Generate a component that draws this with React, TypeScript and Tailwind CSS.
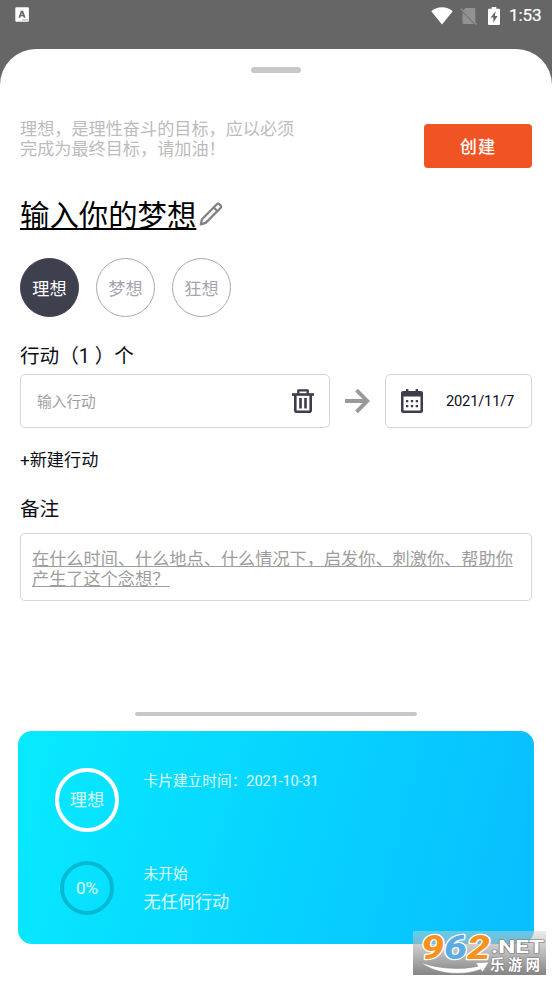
import React from 'react';

function StatusBar() {
  return (
    <div className="flex h-[49px] items-start justify-between pl-[15px] pr-[10px]">
      <svg className="mt-[7px]" width="14" height="15" viewBox="0 0 14 15">
        <rect x="0.3" y="0.2" width="13.6" height="14.6" rx="1.2" fill="#fff" />
        <path fillRule="evenodd" d="M5.900 3.800h2.200L10.600 10.800H8.700l-.5-1.500H5.800l-.5 1.500H3.400ZM7 5.800l-.7 2.100h1.400Z" fill="#666" />
        <path d="M7.200 12.900h6" stroke="#aaa" strokeWidth="1" />
      </svg>
      <div className="flex h-[31px] items-center">
        <svg width="22" height="18" viewBox="0 0 22 18">
          <path d="M0.3 4.2C6-1.1 16-1.1 21.7 4.2L11 17.5Z" fill="#fff" />
        </svg>
        <svg className="ml-[7px]" width="18" height="18" viewBox="0 0 18 18">
          <path d="M5.5 1H14a1.3 1.3 0 0 1 1.3 1.3v13.9L4 4.1V2.5ZM2.5 5.2 14 17H3.8a1.3 1.3 0 0 1-1.3-1.3Z" fill="#929292" />
          <path d="M1 1.8 16.5 17.4" stroke="#929292" strokeWidth="1.4" />
        </svg>
        <svg className="ml-[10px]" width="12" height="18" viewBox="0 0 12 18">
          <path d="M3.7 0h4.6v1.8H11a1 1 0 0 1 1 1V17a1 1 0 0 1-1 1H1a1 1 0 0 1-1-1V2.800a1 1 0 0 1 1-1h2.700Z" fill="#fff" />
          <path d="M7.600 4.200 2.600 10.500h2.800v5l4.200-6.500H6.900Z" fill="#666" />
        </svg>
        <span className="mb-[2px] ml-[9px] w-[33px] whitespace-nowrap text-[17.150px] leading-5 tracking-[-0.100px] text-white [-webkit-text-stroke:0.2px_white]">1:53</span>
      </div>
    </div>
  );
}

function PencilIcon() {
  return (
    <svg className="mb-[5px] ml-[3px]" width="24" height="24" viewBox="0 0 24 24" fill="none" stroke="#828282" strokeWidth="2.300" strokeLinejoin="round">
      <path d="M1.800 22.300 3 17.200 17.600 2.500a2.200 2.200 0 0 1 3.100 0l.6.600a2.200 2.200 0 0 1 0 3.100L6.700 20.900Z" />
      <path d="M14.600 5.300 18.500 9.200" />
    </svg>
  );
}

function TrashIcon() {
  return (
    <svg width="22" height="26" viewBox="0 0 22 26" fill="none" stroke="#3d3d4b">
      <path d="M0 6.500h22" strokeWidth="2.600" />
      <path d="M6.300 6V2.400h9.400V6" strokeWidth="2.300" strokeLinejoin="round" />
      <path d="M3.300 6v16.300a1.500 1.500 0 0 0 1.500 1.500h12.400a1.500 1.500 0 0 0 1.500-1.500V6" strokeWidth="2.600" />
      <path d="M8.500 10v10.500M13.500 10v10.500" strokeWidth="2.600" />
    </svg>
  );
}

function ArrowIcon() {
  return (
    <svg className="ml-[15px]" width="25" height="26" viewBox="0 0 25 26" fill="none" stroke="#999" strokeWidth="3.800">
      <path d="M0 13h22M11.500 2.200 22.300 13l-10.800 10.800" />
    </svg>
  );
}

function CalendarIcon() {
  return (
    <svg width="22" height="24" viewBox="0 0 22 24" fill="#3d3d4b">
      <path fillRule="evenodd" d="M5 0h2.400v2h7.200V0H17v2h3a2 2 0 0 1 2 2v18a2 2 0 0 1-2 2H2a2 2 0 0 1-2-2V4a2 2 0 0 1 2-2h3ZM2.500 7.500v14h17v-14Z" />
      <path d="M5 11h2.300v2.300H5ZM9.850 11h2.300v2.300h-2.300ZM14.700 11H17v2.300h-2.300ZM5 16h2.300v2.300H5ZM9.850 16h2.300v2.300h-2.300ZM14.700 16H17v2.300h-2.300Z" />
    </svg>
  );
}

function Kind({ label, active = false }: { label: string; active?: boolean }) {
  const tone = active
    ? 'border-[#3f404e] bg-[#3f404e] text-white'
    : 'border-[#a8a8b3] text-[#a4a4b0]';
  return (
    <div className={`flex size-[59px] items-center justify-center rounded-full border pt-[2px] text-[17.15px] leading-5 ${tone}`}>
      {label}
    </div>
  );
}

function SiteBadge() {
  return (
    <div className="absolute left-[413px] top-[931px] h-[44px] w-[133px] bg-linear-to-b from-[#d4d4d4]/45 via-[#aaaaaa]/80 to-[#858585]">
      <svg className="overflow-visible" width="133" height="44" viewBox="0 0 133 44">
        <path d="M7.500 31C22 37.500 48 39.500 65 35.200l-2.500-3.400L76 31l-6.500 10-2-2.500C48 45.500 22 43 7.500 31Z" fill="#fff" stroke="#888" strokeWidth="0.500" />
        <g className="font-['Roboto',sans-serif]" fontWeight="800" fontStyle="italic" fontSize="33" stroke="#fff" strokeWidth="2.400" paintOrder="stroke" strokeLinejoin="round">
          <text x="8" y="27.500" fill="#f6921e" textLength="23" lengthAdjust="spacingAndGlyphs">9</text>
          <text x="31" y="27.500" fill="#5aabe6" textLength="23" lengthAdjust="spacingAndGlyphs">6</text>
          <text x="54" y="27.500" fill="#f6921e" textLength="23" lengthAdjust="spacingAndGlyphs">2</text>
        </g>
        <g fill="#fff" stroke="#777" strokeWidth="1.200" paintOrder="stroke" strokeLinejoin="round">
          <text x="78" y="22" className="font-['Roboto',sans-serif]" fontWeight="800" fontSize="17.500" textLength="53" lengthAdjust="spacingAndGlyphs">.NET</text>
          <text x="77" y="39" className="font-['Noto_Sans_CJK_SC',sans-serif]" fontWeight="700" fontSize="14.500" textLength="50">乐游网</text>
        </g>
      </svg>
    </div>
  );
}

function SummaryCard() {
  return (
    <section className="mx-[18px] mt-[15px] flex h-[213px] w-[515.500px] flex-none rounded-[14px] bg-[linear-gradient(105deg,#08e8ff_5%,#06d4ff_50%,#08bfff_95%)] text-white">
      <div className="ml-[37px] flex w-[64px] flex-col items-center pt-[36.500px]">
        <div className="flex size-[64px] flex-none items-center justify-center rounded-full border-4 border-white pt-px text-[17.15px] leading-5 text-white/85">理想</div>
        <div className="mt-[29.500px] flex size-[54px] flex-none items-center justify-center rounded-full border-4 border-[#06b9d3] text-[17.15px] leading-5 text-white/85">0%</div>
      </div>
      <div className="ml-[24.500px] pt-[40px] text-[14.7px] leading-5 text-white/85">
        <p>卡片建立时间：<span className="tracking-[-0.200px]">2021-10-31</span></p>
        <p className="mt-[73px]">未开始</p>
        <p className="mt-[8px] text-[17.15px]">无任何行动</p>
      </div>
    </section>
  );
}

export default function App() {
  return (
    <div className="relative h-[981px] w-[552px] overflow-hidden bg-[#666] font-['Roboto','Noto_Sans_CJK_SC',sans-serif]" lang="zh-CN">
      <StatusBar />
      <main className="flex h-[932px] flex-col rounded-t-[36px] bg-white">
        <div className="mt-[18px] h-[6px] w-[50px] flex-none self-center rounded-full bg-[#c8c8c8]" />
        <div className="mt-[46px] flex h-[49px] flex-none justify-between pl-[20px] pr-[20px]">
          <p className="w-[280px] text-[17.15px] leading-5 text-[#bcbcbc]">
            理想，是理性奋斗的目标，应以必须
            <br />
            完成为最终目标，请加油！
          </p>
          <button className="mt-[5px] h-[44px] w-[108px] rounded-[4px] bg-[#f15424] pt-[3px] text-[17.15px] font-medium tracking-[1.200px] text-white">创建</button>
        </div>
        <div className="mt-[28px] flex h-[40px] flex-none items-center pl-[20px]">
          <h1 className="text-[29.4px] leading-10 text-black underline decoration-[1.500px] underline-offset-[2px]">输入你的梦想</h1>
          <PencilIcon />
        </div>
        <div className="mt-[22px] flex gap-[17px] pl-[20px]">
          <Kind label="理想" active />
          <Kind label="梦想" />
          <Kind label="狂想" />
        </div>
        <h2 className="mt-[28px] pl-[20px] text-[19.6px] leading-6 text-[#0d0d18]">行动（1 ）个</h2>
        <div className="mt-[5px] flex h-[54px] flex-none items-center px-[20px]">
          <div className="flex h-[54.500px] w-[310px] items-center justify-between rounded-[5px] border border-[#d5d5dc] pl-[16px] pr-[15px]">
            <span className="pt-[2px] text-[14.7px] text-[#a0a0a0]">输入行动</span>
            <TrashIcon />
          </div>
          <ArrowIcon />
          <div className="ml-auto flex h-[54px] w-[147px] items-center rounded-[5px] border border-[#d5d5dc] pl-[15px]">
            <CalendarIcon />
            <span className="ml-[23px] pt-px text-[14.7px] tracking-[-0.200px] text-[#0d0d18]">2021/11/7</span>
          </div>
        </div>
        <p className="mt-[22px] pl-[20px] text-[17.15px] leading-5 text-[#0d0d18]">+新建行动</p>
        <h2 className="mt-[28px] pl-[20px] text-[19.6px] leading-6 text-[#0d0d18]">备注</h2>
        <div className="mx-[20px] mt-[11px] h-[68px] flex-none rounded-[5px] border border-[#d5d5dc] pl-[11px] pt-[15px]">
          <p className="whitespace-pre text-[17.180px] leading-5 text-[#9d9d9d] underline decoration-1 underline-offset-[1px]">
            在什么时间、什么地点、什么情况下，启发你、刺激你、帮助你
            <br />
            产生了这个念想？
          </p>
        </div>
        <div className="mt-[111px] h-[4px] w-[282px] flex-none self-center rounded-full bg-[#c8c8c8]" />
        <SummaryCard />
      </main>
      <SiteBadge />
    </div>
  );
}
